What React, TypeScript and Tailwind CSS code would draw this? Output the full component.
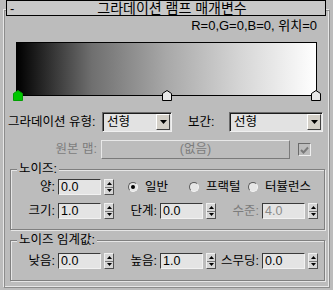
const font = { fontFamily: '"Liberation Sans", "Noto Sans CJK KR", sans-serif' };

function Tri({ up }: { up?: boolean }) {
  return (
    <svg width="5" height="3" viewBox="0 0 5 3">
      <path d={up ? 'M0 3 L2.5 0 L5 3 Z' : 'M0 0 L5 0 L2.5 3 Z'} fill="#000" />
    </svg>
  );
}

function Spin() {
  return (
    <div className="ml-[3px] flex h-[16px] w-[10px] flex-col border border-t-[#f0f0f0] border-l-[#f0f0f0] border-r-[#505050] border-b-[#505050] bg-[#d6d6d6]">
      <div className="flex flex-1 items-center justify-center border-b border-[#7a7a7a]">
        <Tri up />
      </div>
      <div className="flex flex-1 items-center justify-center">
        <Tri />
      </div>
    </div>
  );
}

function Field({ label, value, w, dim }: { label: string; value: string; w: string; dim?: boolean }) {
  return (
    <div className="flex items-center">
      <div className={`${w} text-right pr-[3px] whitespace-nowrap ${dim ? 'text-[#7c7c7c]' : 'text-black'}`}>{label}</div>
      <div className="flex h-[16px] w-[43px] items-center border border-t-[#3a3a3a] border-l-[#3a3a3a] border-r-[#f2f2f2] border-b-[#f2f2f2] bg-[#e4e4e4] pl-[2px] leading-none">
        <span className={dim ? 'text-[#8a8a8a]' : 'text-black'}>{value}</span>
      </div>
      <Spin />
    </div>
  );
}

function Radio({ on, label, w }: { on?: boolean; label: string; w: string }) {
  return (
    <div className={`flex items-center whitespace-nowrap ${w}`}>
      <div className="flex h-[10px] w-[10px] items-center justify-center rounded-full border border-t-[#5a5a5a] border-l-[#5a5a5a] border-r-[#f4f4f4] border-b-[#f4f4f4] bg-[#e6e6e6]">
        {on && <div className="h-[4px] w-[4px] rounded-full bg-black" />}
      </div>
      <span className="ml-[7px]">{label}</span>
    </div>
  );
}

function Drop({ w }: { w: string }) {
  return (
    <div className={`flex h-[20px] ${w} items-center border border-t-[#6a6a6a] border-l-[#6a6a6a] border-r-[#f0f0f0] border-b-[#f0f0f0] bg-[#e2e2e2] shadow-[inset_1px_1px_0_#1c1c1c]`}>
      <span className="flex-1 pl-[4px] leading-none">선형</span>
      <div className="mr-[1px] flex h-[16px] w-[14px] items-center justify-center border border-t-white border-l-white border-r-[#404040] border-b-[#404040] bg-[#d4d0c8]">
        <svg width="7" height="4" viewBox="0 0 7 4">
          <path d="M0 0 L7 0 L3.5 4 Z" fill="#000" />
        </svg>
      </div>
    </div>
  );
}

function Marker({ fill, left }: { fill: string; left: string }) {
  return (
    <svg className={`absolute top-[47px] ${left}`} width="10" height="11" viewBox="0 0 10 11">
      <path d="M0.5 10.5 V3.5 L5 0.5 L9.5 3.5 V10.5 Z" fill={fill} stroke={fill === '#00c800' ? '#00a000' : '#000'} />
    </svg>
  );
}

function Group({ title, children, cls }: { title: string; children: React.ReactNode; cls: string }) {
  return (
    <div className={`relative ml-[6px] w-[315px] border border-[#808080] shadow-[inset_1px_1px_0_#e6e6e6,1px_1px_0_#e6e6e6] ${cls}`}>
      <span className="absolute -top-[9px] left-[6px] bg-[#bcbcbc] px-[2px] leading-[16px]">{title}</span>
      {children}
    </div>
  );
}

export default function App() {
  return (
    <div className="h-[290px] w-[333px] overflow-hidden bg-[#bcbcbc] text-[12.5px] text-black" style={font}>
      <div className="relative z-10 ml-[6px] flex h-[16px] w-[320px] items-center border border-black bg-[#c8c8c8]">
        <span className="w-[10px] pl-[3px] text-[13px] leading-none">-</span>
        <span className="flex-1 pl-[2px] text-center text-[14px] leading-none">그라데이션 램프 매개변수</span>
      </div>

      <div className="-mt-[7px] ml-[3px] h-[279px] w-[327px] border border-t-[#e6e6e6] border-l-[#e6e6e6] border-r-[#8c8c8c] border-b-[#8c8c8c] shadow-[inset_1px_1px_0_#8c8c8c,inset_-1px_-1px_0_#e6e6e6]">
        <div className="mt-[9px] h-[14px] pr-[12px] text-right text-[13px] leading-[14px]">R=0,G=0,B=0, 위치=0</div>

        <div className="relative mt-[9px] ml-[12px] h-[54px] w-[301px] border border-black bg-[linear-gradient(to_right,#000,#6f6f6f_25%,#a8a8a8_50%,#d6d6d6_75%,#fff)]">
          <Marker fill="#00c800" left="-left-[4px]" />
          <Marker fill="#e8e8e8" left="left-[145px]" />
          <Marker fill="#e8e8e8" left="left-[294px]" />
        </div>

        <div className="mt-[16px] flex h-[20px] items-center">
          <div className="ml-[4px] w-[94px] whitespace-nowrap">그라데이션 유형:</div>
          <Drop w="w-[70px]" />
          <div className="ml-[16px] w-[41px]">보간:</div>
          <Drop w="w-[94px]" />
        </div>

        <div className="mt-[8px] flex h-[19px] items-center">
          <div className="w-[97px] pr-[4px] text-right text-[#7c7c7c]">원본 맵:</div>
          <div className="flex h-[19px] w-[189px] items-center justify-center border border-t-[#e8e8e8] border-l-[#e8e8e8] border-r-[#7a7a7a] border-b-[#7a7a7a] text-[#7c7c7c]">
            (없음)
          </div>
          <div className="ml-[8px] flex h-[13px] w-[13px] items-center justify-center border border-t-[#6a6a6a] border-l-[#6a6a6a] border-r-[#efefef] border-b-[#efefef] bg-[#bcbcbc]">
            <svg width="9" height="8" viewBox="0 0 9 8">
              <path d="M1 4 L3.5 6.5 L8 1.5" fill="none" stroke="#7a7a7a" strokeWidth="2" />
            </svg>
          </div>
        </div>

        <Group title="노이즈:" cls="mt-[10px] h-[61px]">
          <div className="mt-[9px] flex h-[16px] items-center">
            <Field label="양:" value="0.0" w="w-[47px]" />
            <div className="ml-[14px] flex items-center">
              <Radio on label="일반" w="w-[61px]" />
              <Radio label="프랙털" w="w-[59px]" />
              <Radio label="터뷸런스" w="w-[70px]" />
            </div>
          </div>
          <div className="mt-[8px] flex h-[16px] items-center">
            <Field label="크기:" value="1.0" w="w-[47px]" />
            <Field label="단계:" value="0.0" w="w-[46px]" />
            <Field label="수준:" value="4.0" w="w-[46px]" dim />
          </div>
        </Group>

        <Group title="노이즈 임계값:" cls="mt-[10px] h-[41px]">
          <div className="mt-[12px] flex h-[16px] items-center">
            <Field label="낮음:" value="0.0" w="w-[47px]" />
            <Field label="높음:" value="1.0" w="w-[46px]" />
            <Field label="스무딩:" value="0.0" w="w-[46px]" />
          </div>
        </Group>
      </div>
    </div>
  );
}
